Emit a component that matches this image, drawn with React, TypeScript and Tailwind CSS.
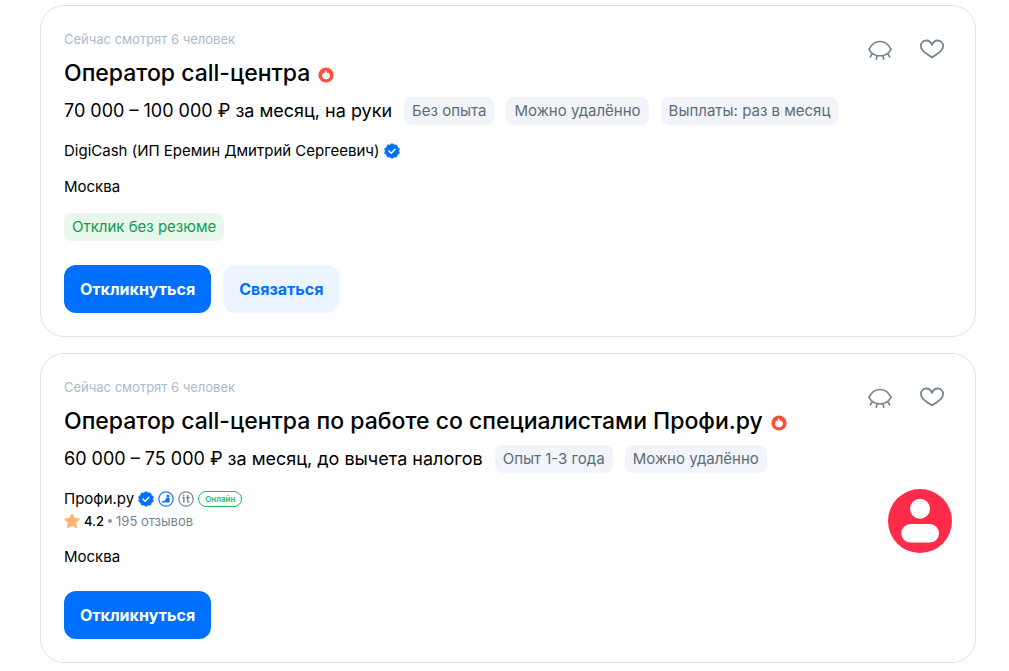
import type { ReactNode } from "react";

function FireIcon() {
  return (
    <svg className="mt-1 size-4 shrink-0" viewBox="0 0 16 16" role="img" aria-label="Горячая вакансия">
      <circle cx="8" cy="8" r="7.6" fill="#ff4f38" />
      <path
        d="M7.7 3.2C8.3 4.4 9.2 5 9.4 6.3C9.8 6.1 10.1 5.8 10.3 5.4C11.3 6.4 11.9 7.5 11.9 8.6A3.9 3.8 0 0 1 4.1 8.6C4.1 7.5 4.8 6.4 5.5 5.7C5.7 6.1 5.9 6.4 6.2 6.6C6.3 5.3 7 4.2 7.7 3.2Z"
        fill="#fff"
      />
    </svg>
  );
}

function VerifiedIcon() {
  return (
    <svg className="size-4 shrink-0" viewBox="0 0 16 16" role="img" aria-label="Проверенная компания">
      <path
        d="M8 0.6L10 2L12.5 2L13.3 4.3L15.4 5.8L14.6 8L15.4 10.2L13.3 11.7L12.5 14L10 14L8 15.4L6 14L3.5 14L2.7 11.7L0.6 10.2L1.4 8L0.6 5.8L2.7 4.3L3.5 2L6 2Z"
        fill="#0070ff"
        stroke="#0070ff"
        strokeWidth="0.8"
        strokeLinejoin="round"
      />
      <path
        d="M5 8.1L7.2 10.2L11 6.3"
        fill="none"
        stroke="#fff"
        strokeWidth="1.5"
        strokeLinecap="round"
        strokeLinejoin="round"
      />
    </svg>
  );
}

function RatingBadgeIcon() {
  return (
    <svg className="size-4 shrink-0" viewBox="0 0 16 16" role="img" aria-label="Рейтинг работодателей">
      <circle cx="8" cy="8" r="7.2" fill="none" stroke="#1a73f0" strokeWidth="1.2" />
      <path d="M3.8 11.6V10.2Q6.4 10 7.4 8.9L8.2 6.8H11.6V11.6Z" fill="#0d6efd" />
      <circle cx="10" cy="5" r="1.5" fill="#0d6efd" />
    </svg>
  );
}

function ItIcon() {
  return (
    <svg className="size-4 shrink-0" viewBox="0 0 16 16" role="img" aria-label="Аккредитованная ИТ-компания">
      <circle cx="8" cy="8" r="7.2" fill="none" stroke="#768694" strokeWidth="1.2" />
      <path
        d="M4.2 6.6H5.9V11.7M9.6 4.1V10.1Q9.6 11.2 10.9 11.2H11.4M8 6.6H12"
        fill="none"
        stroke="#768694"
        strokeWidth="1.4"
      />
      <circle cx="5.7" cy="4.5" r="0.9" fill="#768694" />
    </svg>
  );
}

function StarIcon() {
  return (
    <svg className="size-4 shrink-0" viewBox="0 0 16 16" aria-hidden="true">
      <path
        d="M8 1.2L10 5.6L15.1 6.1L11.3 9.5L12.4 14.5L8 12L3.6 14.5L4.7 9.5L0.9 6.1L6 5.6Z"
        fill="#ffb26b"
        stroke="#ffb26b"
        strokeWidth="1.4"
        strokeLinejoin="round"
      />
    </svg>
  );
}

function HideIcon() {
  return (
    <svg
      className="size-6"
      viewBox="0 0 24 24"
      fill="none"
      stroke="#768694"
      strokeWidth="1.7"
      strokeLinejoin="round"
      aria-hidden="true"
    >
      <path d="M0.9 12.4C3.4 7.4 7.2 4.5 12 4.5S20.6 7.4 23.1 12.4C20.6 16.7 17 18.9 12 18.9S3.4 16.7 0.9 12.4Z" />
      <path d="M4.2 16.6L2 20.4M8.9 18.7L8.3 22.9M15.1 18.7L15.7 22.9M19.8 16.6L22 20.4" />
    </svg>
  );
}

function HeartIcon() {
  return (
    <svg
      className="size-6"
      viewBox="0 0 24 24"
      fill="none"
      stroke="#768694"
      strokeWidth="1.8"
      strokeLinejoin="round"
      aria-hidden="true"
    >
      <path d="M12 7.9C10.9 5 8.8 3.5 6.4 3.5C3.2 3.5 0.9 5.8 0.9 8.9C0.9 11.1 1.8 12.7 3.3 14.2C5.8 16.6 8.5 18.4 12 20.4C15.5 18.4 18.2 16.6 20.7 14.2C22.2 12.7 23.1 11.1 23.1 8.9C23.1 5.8 20.8 3.5 17.6 3.5C15.2 3.5 13.1 5 12 7.9Z" />
    </svg>
  );
}

function ProfiLogo() {
  return (
    <svg className="size-16" viewBox="0 0 64 64" role="img" aria-label="Профи.ру">
      <circle cx="32" cy="32" r="32" fill="#ff2b4b" />
      <circle cx="32" cy="19.7" r="10" fill="#fff" />
      <rect x="13.3" y="35" width="37.7" height="18.6" rx="9.3" fill="#fff" />
    </svg>
  );
}

function Chip({ children }: { children: ReactNode }) {
  return (
    <span className="rounded-lg bg-[#f1f4f9] px-2 text-[15px] leading-7 text-[#5e6c77]">{children}</span>
  );
}

interface CardProps {
  title: string;
  salary: string;
  chips: string[];
  employer: ReactNode;
  logo?: ReactNode;
  noResume?: boolean;
  contact?: boolean;
}

function VacancyCard({ title, salary, chips, employer, logo, noResume, contact }: CardProps) {
  return (
    <article className="flex justify-between rounded-3xl border border-[#dce3eb] bg-white p-[23px]">
      <div className="min-w-0 flex-1">
        <p className="text-[13px] leading-5 text-[#aabbca]">Сейчас смотрят 6 человек</p>
        <h2 className="mt-2 flex items-center gap-2 text-[23px] leading-8 font-medium">
          <a href="#vacancy">{title}</a>
          <FireIcon />
        </h2>
        <div className="mt-2 flex flex-wrap items-center gap-3">
          <span className="text-lg leading-6">{salary}</span>
          {chips.map((chip) => (
            <Chip key={chip}>{chip}</Chip>
          ))}
        </div>
        <div className="mt-4">{employer}</div>
        <p className="mt-4 text-[15px] leading-5">Москва</p>
        {noResume && (
          <p className="mt-4 w-fit rounded-lg bg-[#e7f8eb] px-2 text-[15px] leading-7 text-[#0d9b52]">
            Отклик без резюме
          </p>
        )}
        <div className="mt-6 flex gap-3">
          <button type="button" className="h-12 rounded-xl bg-[#0070ff] px-4 text-base font-bold text-white">
            Откликнуться
          </button>
          {contact && (
            <button type="button" className="h-12 rounded-xl bg-[#ebf4ff] px-4 text-base font-bold text-[#0070ff]">
              Связаться
            </button>
          )}
        </div>
      </div>
      <div className="flex shrink-0 flex-col items-end">
        <div className="flex gap-7 px-2 pt-2">
          <button type="button" aria-label="Скрыть вакансию">
            <HideIcon />
          </button>
          <button type="button" aria-label="Добавить в избранное">
            <HeartIcon />
          </button>
        </div>
        {logo && <div className="mt-20">{logo}</div>}
      </div>
    </article>
  );
}

export default function App() {
  return (
    <main className="flex flex-col gap-4 bg-white pt-[5px] pr-[33px] pb-2 pl-10 font-['Inter','Liberation_Sans',sans-serif] text-black">
      <VacancyCard
        title="Оператор call-центра"
        salary={"70\u00a0000 – 100\u00a0000 ₽ за месяц, на руки"}
        chips={["Без опыта", "Можно удалённо", "Выплаты: раз в месяц"]}
        employer={
          <div className="flex items-center gap-1 text-[15px] leading-5">
            <a href="#employer">DigiCash (ИП Еремин Дмитрий Сергеевич)</a>
            <VerifiedIcon />
          </div>
        }
        noResume
        contact
      />
      <VacancyCard
        title="Оператор call-центра по работе со специалистами Профи.ру"
        salary={"60\u00a0000 – 75\u00a0000 ₽ за месяц, до вычета налогов"}
        chips={["Опыт 1-3 года", "Можно удалённо"]}
        employer={
          <>
            <div className="flex items-center gap-1 text-[15px] leading-5">
              <a href="#employer">Профи.ру</a>
              <VerifiedIcon />
              <RatingBadgeIcon />
              <ItIcon />
              <span className="rounded-full border border-[#17bf63] px-[6px] text-[8px] leading-[14px] font-semibold text-[#17bf63]">
                Онлайн
              </span>
            </div>
            <div className="mt-0.5 flex items-center gap-1 text-[13px] leading-5">
              <StarIcon />
              <span className="font-medium">4.2</span>
              <span className="size-1 rounded-full bg-[#8796a5]" />
              <a href="#reviews" className="text-[#768694]">
                195 отзывов
              </a>
            </div>
          </>
        }
        logo={<ProfiLogo />}
      />
    </main>
  );
}
